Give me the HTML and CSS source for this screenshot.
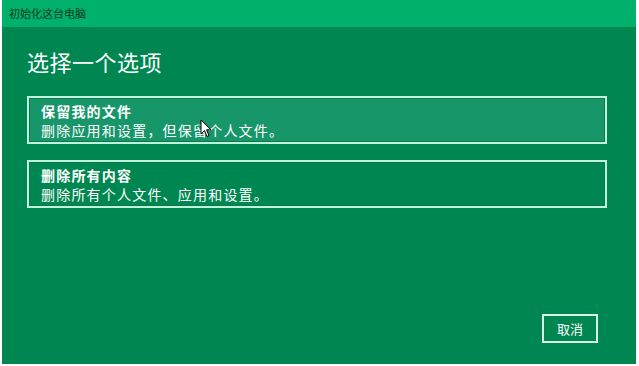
FILE: index.html
```html
<!DOCTYPE html>
<html lang="zh-CN">
<head>
<meta charset="utf-8">
<title>初始化这台电脑</title>
<link rel="stylesheet" href="styles.css">
</head>
<body>
<div class="window">
  <div class="titlebar">初始化这台电脑</div>
  <div class="content">
    <h1 class="heading">选择一个选项</h1>
    <div class="options">
      <div class="option option-hover">
        <div class="option-title">保留我的文件</div>
        <div class="option-desc">删除应用和设置，但保留个人文件。</div>
        <svg class="cursor" width="12" height="19" viewBox="0 0 12 19"><path d="M1 1 L1 15 L4.5 11.5 L7 17.5 L9 16.6 L6.6 10.8 L11 10.8 Z" fill="#fff" stroke="#000" stroke-width="1"/></svg>
      </div>
      <div class="option">
        <div class="option-title">删除所有内容</div>
        <div class="option-desc">删除所有个人文件、应用和设置。</div>
      </div>
    </div>
    <div class="footer">
      <button class="btn">取消</button>
    </div>
  </div>
</div>
</body>
</html>
```
FILE: styles.css
```css
* { box-sizing: border-box; }
html, body { margin: 0; padding: 0; background: #ffffff; }
body {
  width: 639px;
  height: 366px;
  padding: 0 3px 2px 2px;
  font-family: "Noto Sans CJK SC", "Noto Sans", sans-serif;
}
.window {
  width: 634px;
  height: 364px;
  display: flex;
  flex-direction: column;
  background: #008751;
}
.titlebar {
  height: 27px;
  background: #00b16b;
  color: #0c3a22;
  font-size: 11px;
  line-height: 26px;
  padding-left: 7px;
}
.content {
  flex: 1;
  display: flex;
  flex-direction: column;
  padding: 19px 29px 21px 25px;
}
.heading {
  margin: 0;
  font-size: 22px;
  letter-spacing: 0.5px;
  font-weight: 400;
  color: #ffffff;
  line-height: 30px;
  height: 30px;
}
.options {
  margin-top: 20px;
  display: flex;
  flex-direction: column;
  gap: 16px;
}
.option {
  position: relative;
  height: 48px;
  border: 2px solid #bff3dc;
  box-shadow: inset 0 0 0 1px #0a7a4a;
  padding: 4px 12px 0 12px;
  color: #ffffff;
}
.option-hover { background: #17966a; }
.option-title {
  font-size: 14px;
  letter-spacing: 1.2px;
  font-weight: 700;
  line-height: 19px;
}
.option-desc {
  font-size: 14px;
  letter-spacing: 1.2px;
  line-height: 19px;
}
.cursor {
  position: absolute;
  left: 171px;
  top: 21px;
}
.footer {
  margin-top: auto;
  display: flex;
  justify-content: flex-end;
}
.btn {
  width: 56px;
  height: 29px;
  margin-right: 9px;
  background: transparent;
  border: 2px solid #d6f5e6;
  color: #ffffff;
  font-family: "Noto Sans CJK SC", sans-serif;
  font-size: 13px;
  padding: 0;
}
```
